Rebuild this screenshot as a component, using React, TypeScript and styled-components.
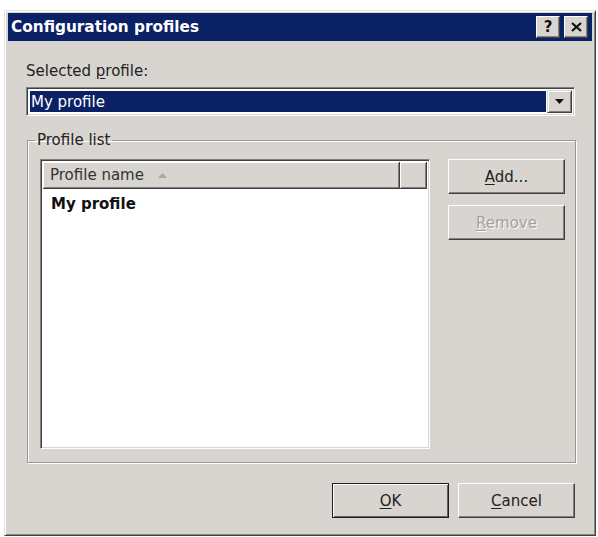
import React from 'react';
import styled, { createGlobalStyle, css } from 'styled-components';

const GlobalStyle = createGlobalStyle`
  body {
    margin: 0;
    background: #ffffff;
    font-family: "DejaVu Sans", Verdana, sans-serif;
  }
`;

const Page = styled.div`
  padding: 10px 0 0 4px;
`;

const Dialog = styled.div`
  width: 592px;
  height: 526px;
  box-sizing: border-box;
  background: #d8d5d0;
  border: 1px solid;
  border-color: #e2dfda #404040 #404040 #e2dfda;
  box-shadow: inset 1px 1px #ffffff, inset -1px -1px #8a8783;
  padding: 2px 3px 3px 3px;
  display: flex;
  flex-direction: column;
`;

const TitleBar = styled.div`
  height: 28px;
  background: #0b2166;
  display: flex;
  align-items: center;
  padding: 0 4px 0 3px;
  gap: 4px;
`;

const Title = styled.div`
  flex: 1;
  color: #ffffff;
  font-weight: bold;
  font-size: 15.3px;
`;

const CaptionButton = styled.div`
  width: 24px;
  height: 22px;
  box-sizing: border-box;
  background: #d8d5d0;
  border: 1px solid;
  border-color: #ffffff #404040 #404040 #ffffff;
  box-shadow: inset -1px -1px #808080;
  display: flex;
  align-items: center;
  justify-content: center;
  font-weight: bold;
  font-size: 15px;
  color: #111;
  line-height: 1;
`;

const Body = styled.div`
  flex: 1;
  display: flex;
  flex-direction: column;
  padding: 21px 17px 0 18px;
  font-size: 15px;
  color: #222;
`;

const Label = styled.div`
  line-height: 18px;
  margin-bottom: 7px;
`;

const Key = styled.span`
  text-decoration: underline;
  text-underline-offset: 2px;
`;

const Combo = styled.div`
  height: 29px;
  box-sizing: border-box;
  background: #ffffff;
  border: 1px solid;
  border-color: #808080 #ffffff #ffffff #808080;
  box-shadow: inset 1px 1px #404040, inset -1px -1px #d8d5d0;
  padding: 2px;
  display: flex;
  align-items: stretch;
`;

const ComboValue = styled.div`
  flex: 1;
  margin: 1px;
  background: #0b2166;
  color: #ffffff;
  display: flex;
  align-items: center;
  padding-left: 1px;
`;

const DropButton = styled.div`
  width: 25px;
  box-sizing: border-box;
  background: #d8d5d0;
  border: 1px solid;
  border-color: #d8d5d0 #404040 #404040 #d8d5d0;
  box-shadow: inset 1px 1px #ffffff, inset -1px -1px #808080;
  display: flex;
  align-items: center;
  justify-content: center;
`;

const Group = styled.fieldset`
  margin: 16px -1px 0 1px;
  padding: 0;
  border: 1px solid #9a9793;
  box-shadow: inset 1px 1px #ffffff, 1px 1px #ffffff;
`;

const Legend = styled.legend`
  padding: 0 2px;
  margin-left: 7px;
  line-height: 16px;
`;

const GroupBody = styled.div`
  height: 314px;
  box-sizing: border-box;
  padding: 11px 10px 13px 12px;
  display: flex;
  gap: 18px;
  align-items: stretch;
`;

const ListView = styled.div`
  width: 390px;
  box-sizing: border-box;
  background: #ffffff;
  border: 1px solid;
  border-color: #808080 #ffffff #ffffff #808080;
  box-shadow: inset 1px 1px #404040, inset -1px -1px #d8d5d0;
  padding: 2px;
  display: flex;
  flex-direction: column;
`;

const Header = styled.div`
  display: flex;
  height: 27px;
`;

const HeaderCell = styled.div<{ $grow?: boolean }>`
  ${({ $grow }) => ($grow ? css`flex: 1;` : css`width: 27px;`)}
  box-sizing: border-box;
  background: #d8d5d0;
  border-right: 1px solid #404040;
  border-bottom: 1px solid #404040;
  box-shadow: inset 1px 1px #ffffff, inset -1px -1px #808080;
  display: flex;
  align-items: center;
  gap: 14px;
  padding-left: 7px;
  color: #333;
`;

const Row = styled.div`
  font-weight: bold;
  padding: 6px 0 0 8px;
  color: #111;
`;

const SideButtons = styled.div`
  display: flex;
  flex-direction: column;
  gap: 11px;
`;

const Button = styled.div<{ $default?: boolean; $disabled?: boolean }>`
  width: 117px;
  height: 35px;
  box-sizing: border-box;
  background: #d8d5d0;
  border: 1px solid;
  border-color: #ffffff #404040 #404040 #ffffff;
  box-shadow: inset -1px -1px #808080;
  display: flex;
  align-items: center;
  justify-content: center;
  color: #222;
  ${({ $default }) =>
    $default &&
    css`
      border-color: #202020;
      box-shadow: inset 1px 1px #ffffff, inset -1px -1px #606060;
    `}
  ${({ $disabled }) =>
    $disabled &&
    css`
      color: #a4a19c;
      text-shadow: 1px 1px #ffffff;
    `}
`;

const Footer = styled.div`
  display: flex;
  justify-content: flex-end;
  gap: 9px;
  margin-top: 20px;
`;

export default function App() {
  return (
    <Page>
      <GlobalStyle />
      <Dialog>
        <TitleBar>
          <Title>Configuration profiles</Title>
          <CaptionButton>?</CaptionButton>
          <CaptionButton>
            <svg width="11" height="10" viewBox="0 0 11 10">
              <path d="M1 1 L10 9 M10 1 L1 9" stroke="#111" strokeWidth="2.2" />
            </svg>
          </CaptionButton>
        </TitleBar>
        <Body>
          <Label>
            Selected <Key>p</Key>rofile:
          </Label>
          <Combo>
            <ComboValue>My profile</ComboValue>
            <DropButton>
              <svg width="9" height="5" viewBox="0 0 9 5">
                <path d="M0 0 H9 L4.5 5 Z" fill="#111" />
              </svg>
            </DropButton>
          </Combo>
          <Group>
            <Legend>Profile list</Legend>
            <GroupBody>
              <ListView>
                <Header>
                  <HeaderCell $grow>
                    Profile name
                    <svg width="9" height="5" viewBox="0 0 9 5">
                      <path d="M0 5 H9 L4.5 0 Z" fill="#aaa7a2" />
                    </svg>
                  </HeaderCell>
                  <HeaderCell />
                </Header>
                <Row>My profile</Row>
              </ListView>
              <SideButtons>
                <Button>
                  <span>
                    <Key>A</Key>dd...
                  </span>
                </Button>
                <Button $disabled>
                  <span>
                    <Key>R</Key>emove
                  </span>
                </Button>
              </SideButtons>
            </GroupBody>
          </Group>
          <Footer>
            <Button $default>
              <span>
                <Key>O</Key>K
              </span>
            </Button>
            <Button>
              <span>
                <Key>C</Key>ancel
              </span>
            </Button>
          </Footer>
        </Body>
      </Dialog>
    </Page>
  );
}
